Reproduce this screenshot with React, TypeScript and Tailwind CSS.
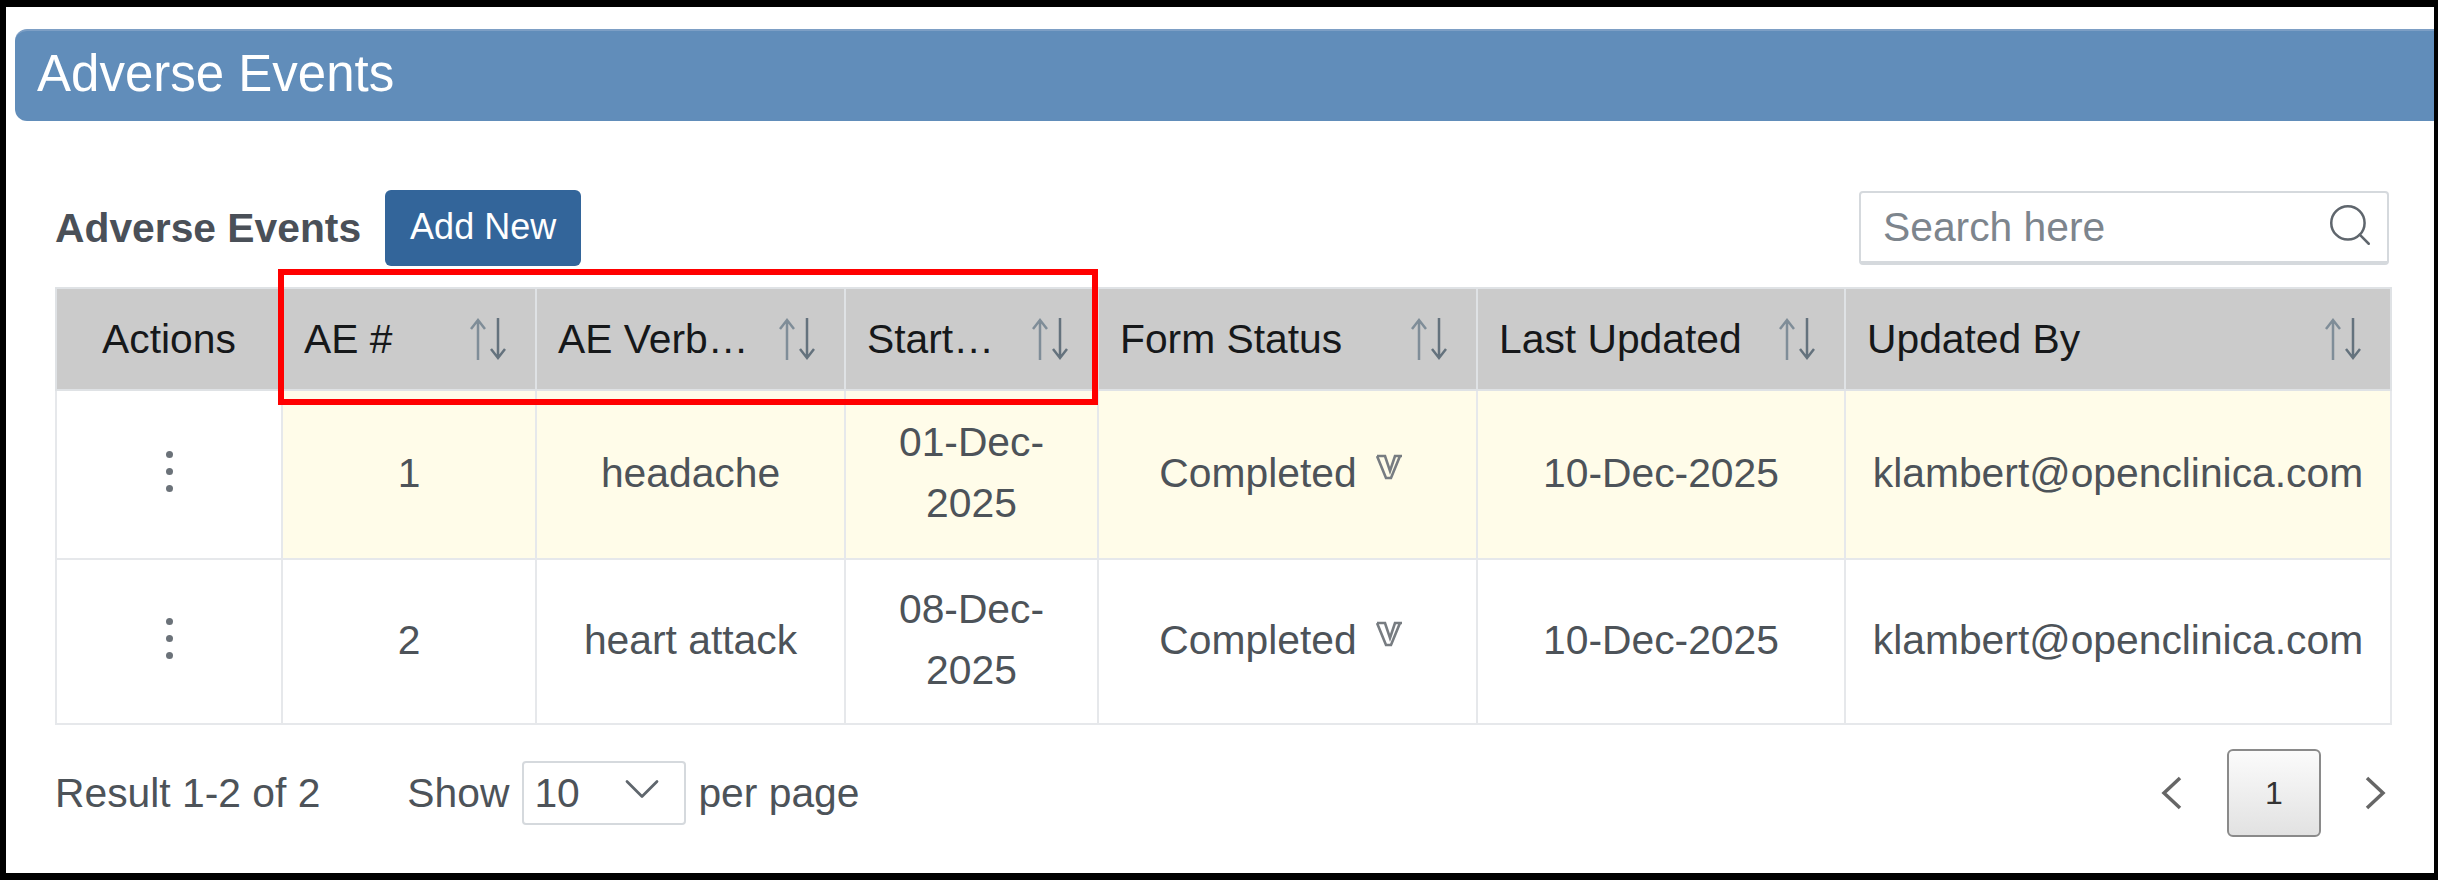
import { ChevronDown, Search } from "lucide-react";

const rows = [
  { id: "1", term: "headache", start: ["01-Dec-", "2025"], highlight: true, height: "h-[169px]" },
  { id: "2", term: "heart attack", start: ["08-Dec-", "2025"], highlight: false, height: "h-[165px]" },
];

// Up / down sort arrows shown in every sortable header
function SortIcon() {
  return (
    <svg width="40" height="44" viewBox="0 0 40 44" className="shrink-0" fill="none" strokeWidth="2.5">
      <path d="M10 43V3M3 12l7-9 7 9" stroke="#7f8d98" />
      <path d="M30 1v40M23 32l7 9 7-9" stroke="#64727d" />
    </svg>
  );
}

// Outlined double-struck V next to the form status
function VerifiedIcon() {
  return (
    <svg width="27" height="26" viewBox="0 0 27 26" fill="none" stroke="#777c81" strokeWidth="2.6" className="mb-[12px] shrink-0">
      <path d="M1 2h8l5 15 5-15h7" />
      <path d="M1 2l9 22h5l9-22" />
    </svg>
  );
}

function PageArrow({ d }: { d: string }) {
  return (
    <svg width="22" height="34" viewBox="0 0 22 34" fill="none" stroke="#666" strokeWidth="3.5" className="shrink-0">
      <path d={d} />
    </svg>
  );
}

function SortHeader({ label }: { label: string }) {
  return (
    <th className="border-2 border-[#dfe2e5] px-0 font-normal">
      <div className="flex items-center pl-[21px] pr-[27px]">
        <span className="flex-1 whitespace-nowrap text-left">{label}</span>
        <SortIcon />
      </div>
    </th>
  );
}

function Dots() {
  return (
    <div className="flex flex-col items-center gap-[10px] pb-[6px]">
      <span className="h-[7px] w-[7px] rounded-full bg-[#6b7279]" />
      <span className="h-[7px] w-[7px] rounded-full bg-[#6b7279]" />
      <span className="h-[7px] w-[7px] rounded-full bg-[#6b7279]" />
    </div>
  );
}

export default function App() {
  return (
    <div className="h-[880px] w-[2438px] bg-black pb-[7px] pl-[6px] pr-[4px] pt-[7px] font-['Liberation_Sans',sans-serif] text-[40.8px] leading-[61px] text-[#4d5359]">
      <div className="h-full bg-white pt-[22px]">
        {/* Page banner */}
        <div className="ml-[9px] flex h-[92px] items-center rounded-l-[12px] border-t-2 border-[#7d9fc5] bg-[#618dba] pb-[6px] pl-[22px] text-[51px] text-white">
          Adverse Events
        </div>

        <div className="relative pl-[49px] pr-[43px]">
          {/* Toolbar */}
          <div className="mt-[69px] flex h-[76px] items-center">
            <h2 className="text-[40.8px] font-bold text-[#4a5058]">Adverse Events</h2>
            <button className="ml-[24px] h-[76px] w-[196px] rounded-[6px] bg-[#33659a] pb-[4px] text-[36px] text-white">Add New</button>
            <div className="ml-auto mr-[2px] flex h-[74px] w-[530px] items-center rounded-[4px] border-2 border-b-4 border-[#d5d9dd] pl-[22px] pr-[12px]">
              <input
                placeholder="Search here"
                className="min-w-0 flex-1 bg-transparent text-[40.8px] outline-none placeholder:text-[#7d858d]"
              />
              <Search size={50} strokeWidth={1.2} className="mb-[4px] text-[#5f666d]" />
            </div>
          </div>

          {/* Adverse events table */}
          <table className="mt-[21px] w-[2335px] table-fixed border-collapse text-center">
            <colgroup>
              <col className="w-[226px]" />
              <col className="w-[254px]" />
              <col className="w-[309px]" />
              <col className="w-[253px]" />
              <col className="w-[379px]" />
              <col className="w-[368px]" />
              <col className="w-[546px]" />
            </colgroup>
            <thead>
              <tr className="h-[102px] bg-[#cbcbcb] text-[#16181a]">
                <th className="border-2 border-[#dfe2e5] font-normal">Actions</th>
                <SortHeader label="AE #" />
                <SortHeader label="AE Verb…" />
                <SortHeader label="Start…" />
                <SortHeader label="Form Status" />
                <SortHeader label="Last Updated" />
                <SortHeader label="Updated By" />
              </tr>
            </thead>
            <tbody>
              {rows.map((row) => (
                <tr key={row.id} className={row.height}>
                  <td className="border-2 border-[#e6e8eb]">
                    <Dots />
                  </td>
                  {[
                    row.id,
                    row.term,
                    <>
                      {row.start[0]}
                      <br />
                      {row.start[1]}
                    </>,
                    <span className="inline-flex items-center gap-[19px] pr-[13px]">
                      Completed
                      <VerifiedIcon />
                    </span>,
                    "10-Dec-2025",
                    "klambert@openclinica.com",
                  ].map((cell, i) => (
                    <td key={i} className={`border-2 border-[#e6e8eb] pb-[3px] ${row.highlight ? "bg-[#fffce9]" : "bg-white"}`}>
                      {cell}
                    </td>
                  ))}
                </tr>
              ))}
            </tbody>
          </table>

          {/* Footer: result count, page size, pagination */}
          <div className="mt-[24px] flex h-[88px] items-center">
            <span>Result 1-2 of 2</span>
            <span className="ml-[87px]">Show</span>
            <div className="ml-[13px] flex h-[64px] w-[164px] items-center justify-between rounded-[4px] border-2 border-[#d5d9dd] pl-[10px] pr-[12px]">
              10
              <ChevronDown size={60} strokeWidth={1.1} className="mb-[8px] text-[#5f666d]" />
            </div>
            <span className="ml-[12px]">per page</span>
            <div className="ml-auto mr-[4px] flex items-center">
              <PageArrow d="M20 2L4 17l16 15" />
              <button className="ml-[45px] mr-[44px] h-[88px] w-[94px] rounded-[6px] border-2 border-[#8a8a8a] bg-gradient-to-b from-[#fbfbfb] to-[#e2e2e2] text-[32px] text-[#333]">
                1
              </button>
              <PageArrow d="M2 2l16 15L2 32" />
            </div>
          </div>

          {/* Red annotation around the three marked columns */}
          <div className="pointer-events-none absolute left-[272px] top-[79px] h-[136px] w-[820px] border-[6px] border-[#ff0000]" />
        </div>
      </div>
    </div>
  );
}
